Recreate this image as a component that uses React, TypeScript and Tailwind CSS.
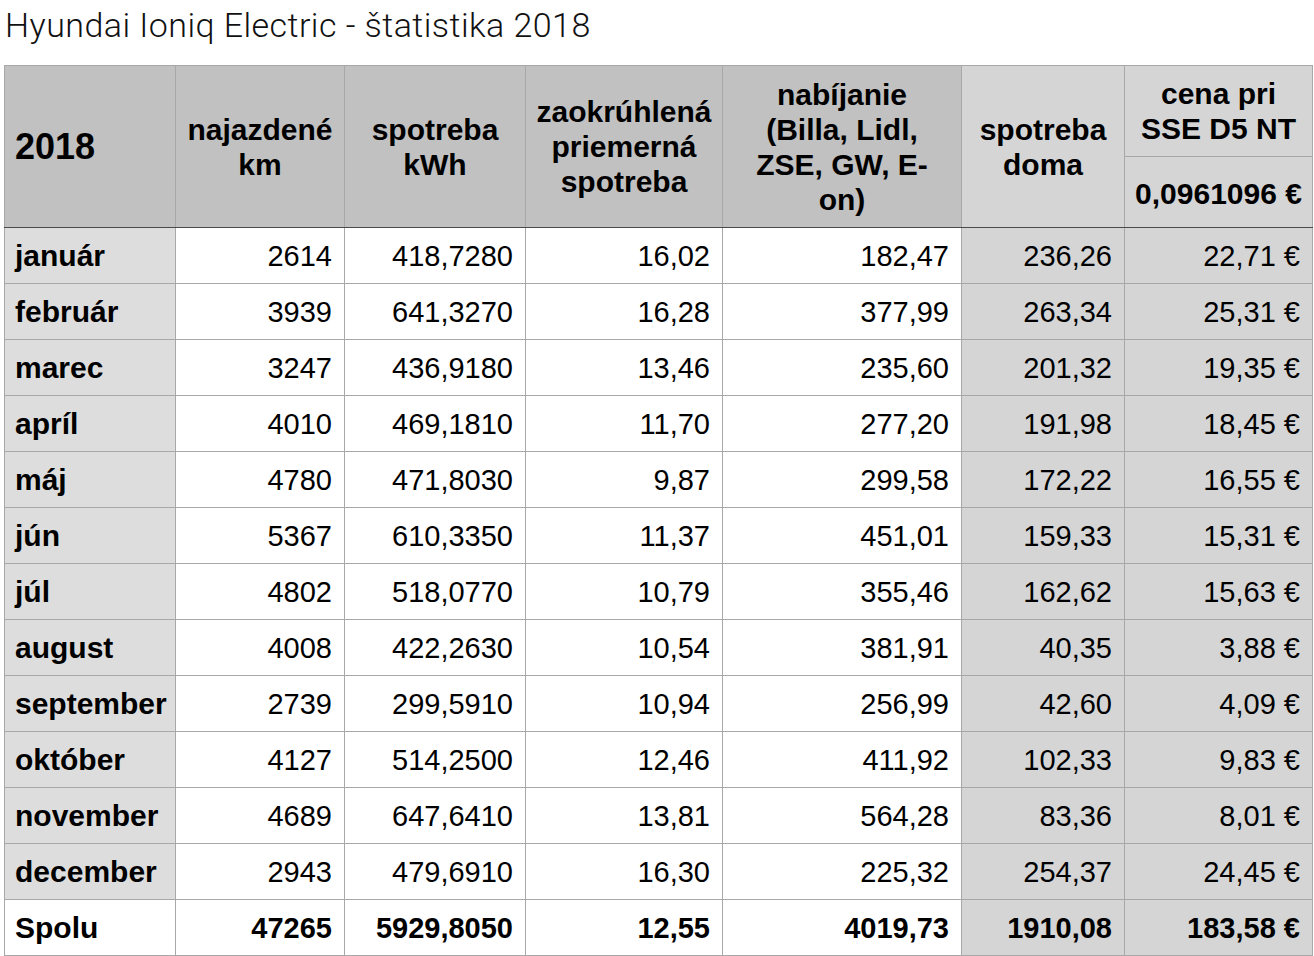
import React from "react";

type Row = [string, string, string, string, string, string, string];

const rows: Row[] = [
  ["január", "2614", "418,7280", "16,02", "182,47", "236,26", "22,71 €"],
  ["február", "3939", "641,3270", "16,28", "377,99", "263,34", "25,31 €"],
  ["marec", "3247", "436,9180", "13,46", "235,60", "201,32", "19,35 €"],
  ["apríl", "4010", "469,1810", "11,70", "277,20", "191,98", "18,45 €"],
  ["máj", "4780", "471,8030", "9,87", "299,58", "172,22", "16,55 €"],
  ["jún", "5367", "610,3350", "11,37", "451,01", "159,33", "15,31 €"],
  ["júl", "4802", "518,0770", "10,79", "355,46", "162,62", "15,63 €"],
  ["august", "4008", "422,2630", "10,54", "381,91", "40,35", "3,88 €"],
  ["september", "2739", "299,5910", "10,94", "256,99", "42,60", "4,09 €"],
  ["október", "4127", "514,2500", "12,46", "411,92", "102,33", "9,83 €"],
  ["november", "4689", "647,6410", "13,81", "564,28", "83,36", "8,01 €"],
  ["december", "2943", "479,6910", "16,30", "225,32", "254,37", "24,45 €"],
];

const total: Row = ["Spolu", "47265", "5929,8050", "12,55", "4019,73", "1910,08", "183,58 €"];

const widths = [171, 169, 181, 197, 239, 163, 188];

export default function App() {
  return (
    <div className="min-h-[956px] w-[1314px] bg-white text-black">
      <div className="flex h-[65px] items-start pl-[5px] pt-[3px] font-[family-name:Roboto,sans-serif] text-[34px] font-light leading-[44px] tracking-[0.45px] text-[#111]">
        Hyundai Ioniq Electric - štatistika 2018
      </div>
      <table className="ml-[4px] w-[1308px] table-fixed border-collapse font-[family-name:'Liberation_Sans',Arial,sans-serif]">
        <colgroup>
          {widths.map((w, i) => (
            <col key={i} style={{ width: w }} />
          ))}
        </colgroup>
        <thead>
          <tr className="h-[91px]">
            <th
              rowSpan={2}
              className="border border-[#a8a8a8] border-b-[#4a4a4a] bg-[#c0c1c0] pl-[10px] pr-0 text-left align-middle text-[36px] font-bold leading-[40px]"
            >
              2018
            </th>
            <th
              rowSpan={2}
              className="border border-[#a8a8a8] border-b-[#4a4a4a] bg-[#c0c1c0] px-0 text-center align-middle text-[30px] font-bold leading-[35px]"
            >
              najazdené
              <br />
              km
            </th>
            <th
              rowSpan={2}
              className="border border-[#a8a8a8] border-b-[#4a4a4a] bg-[#c0c1c0] px-0 text-center align-middle text-[30px] font-bold leading-[35px]"
            >
              spotreba
              <br />
              kWh
            </th>
            <th
              rowSpan={2}
              className="border border-[#a8a8a8] border-b-[#4a4a4a] bg-[#c0c1c0] px-0 text-center align-middle text-[30px] font-bold leading-[35px]"
            >
              zaokrúhlená
              <br />
              priemerná
              <br />
              spotreba
            </th>
            <th
              rowSpan={2}
              className="border border-[#a8a8a8] border-b-[#4a4a4a] bg-[#c0c1c0] px-0 text-center align-middle text-[30px] font-bold leading-[35px]"
            >
              nabíjanie
              <br />
              (Billa, Lidl,
              <br />
              ZSE, GW, E-
              <br />
              on)
            </th>
            <th
              rowSpan={2}
              className="border border-[#a8a8a8] border-b-[#4a4a4a] bg-[#d5d5d5] px-0 text-center align-middle text-[30px] font-bold leading-[35px]"
            >
              spotreba
              <br />
              doma
            </th>
            <th className="border border-[#a8a8a8] bg-[#d5d5d5] px-0 text-center align-middle text-[30px] font-bold leading-[35px]">
              cena pri
              <br />
              SSE D5 NT
            </th>
          </tr>
          <tr className="h-[71px]">
            <th className="border border-[#a8a8a8] border-b-[#4a4a4a] bg-[#d5d5d5] px-0 pt-[2px] text-center align-middle text-[30px] font-bold leading-[35px]">
              0,0961096 €
            </th>
          </tr>
        </thead>
        <tbody>
          {rows.map((r, i) => (
            <tr key={i} className="h-[56px]">
              <td className="border border-[#a8a8a8] bg-[#dddddd] pl-[10px] pr-0 text-left align-middle text-[30px] font-bold leading-[34px] whitespace-nowrap">
                {r[0]}
              </td>
              {r.slice(1).map((v, j) => (
                <td
                  key={j}
                  className={`border border-[#a8a8a8] pr-[12px] text-right align-middle text-[29px] leading-[34px] ${
                    j >= 4 ? "bg-[#d5d5d5]" : "bg-white"
                  }`}
                >
                  {v}
                </td>
              ))}
            </tr>
          ))}
          <tr className="h-[56px]">
            <td className="border border-[#a8a8a8] border-t-[#4a4a4a] bg-white pl-[10px] pr-0 text-left align-middle text-[30px] font-bold leading-[34px]">
              {total[0]}
            </td>
            {total.slice(1).map((v, j) => (
              <td
                key={j}
                className={`border border-[#a8a8a8] border-t-[#4a4a4a] pr-[12px] text-right align-middle text-[29px] font-bold leading-[34px] ${
                  j >= 4 ? "bg-[#d5d5d5]" : "bg-white"
                }`}
              >
                {v}
              </td>
            ))}
          </tr>
        </tbody>
      </table>
    </div>
  );
}
